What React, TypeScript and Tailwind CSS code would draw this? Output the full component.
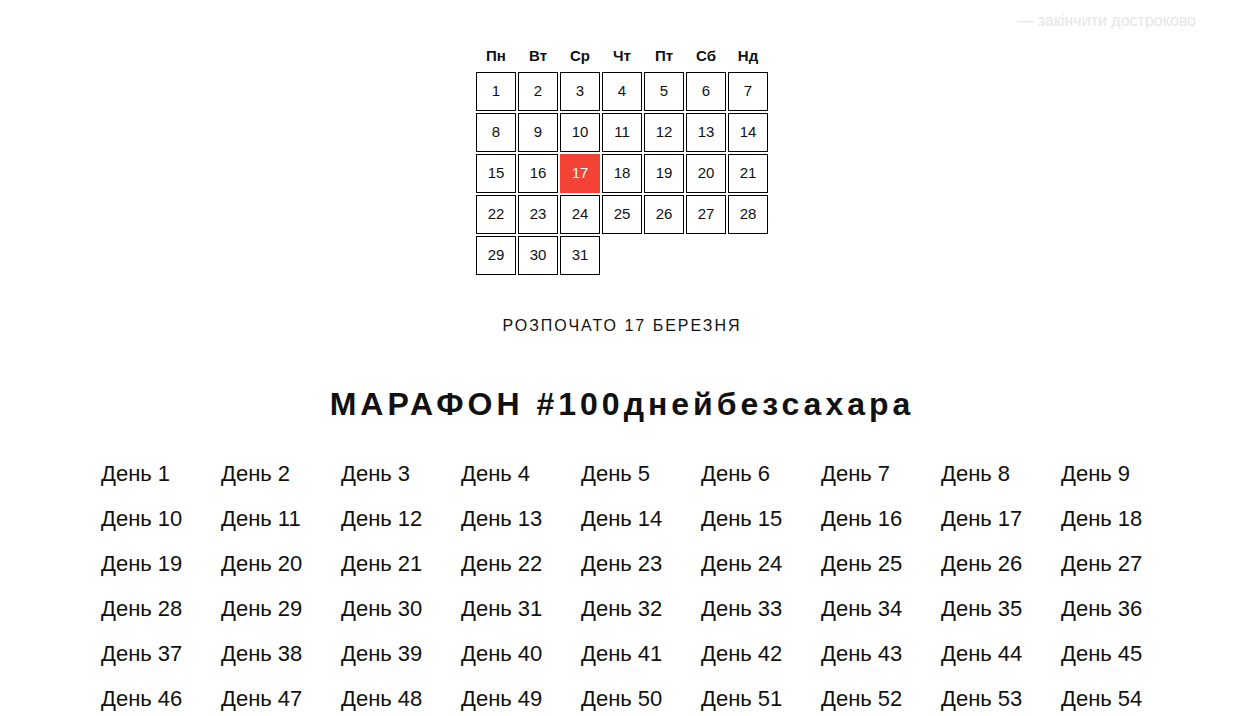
import React from 'react';

const weekDays = ['Пн', 'Вт', 'Ср', 'Чт', 'Пт', 'Сб', 'Нд'];
const monthDays = Array.from({ length: 31 }, (_, i) => i + 1);
const marathonDays = Array.from({ length: 54 }, (_, i) => i + 1);
const today = 17;

const Calendar = () => (
  <div className="grid grid-cols-[repeat(7,40px)] gap-x-[2px] gap-y-[2px]">
    {weekDays.map((d) => (
      <div key={d} className="h-[28px] flex items-center justify-center text-[15px] font-bold">
        {d}
      </div>
    ))}
    {monthDays.map((n) => (
      <div
        key={n}
        className={
          n === today
            ? 'h-[39px] flex items-center justify-center text-[15px] bg-[#f44336] border border-[#f44336] text-white'
            : 'h-[39px] flex items-center justify-center text-[15px] border border-black'
        }
      >
        {n}
      </div>
    ))}
  </div>
);

const App: React.FC = () => {
  return (
    <div className="min-h-screen bg-white text-[#111] font-['Liberation_Sans',Arial,sans-serif]">
      <div className="flex justify-end pr-[38px] pt-[9px] h-[40px]">
        <a href="#" className="text-[16px] text-[#e6e6e6]">— закінчити достроково</a>
      </div>

      <main className="pl-[10px] flex flex-col items-center">
        <div className="mt-[2px]">
          <Calendar />
        </div>

        <p className="mt-[39px] text-[16px] tracking-[2px] uppercase">Розпочато 17 березня</p>

        <h1 className="mt-[42px] text-[32px] font-bold tracking-[4px]">МАРАФОН #100днейбезсахара</h1>

        <div className="mt-[23px] -ml-[2px] grid grid-cols-[repeat(9,120px)]">
          {marathonDays.map((n) => (
            <a key={n} href="#" className="h-[45px] pl-[20px] flex items-center text-[22px]">
              День {n}
            </a>
          ))}
        </div>
      </main>
    </div>
  );
};

export default App;
